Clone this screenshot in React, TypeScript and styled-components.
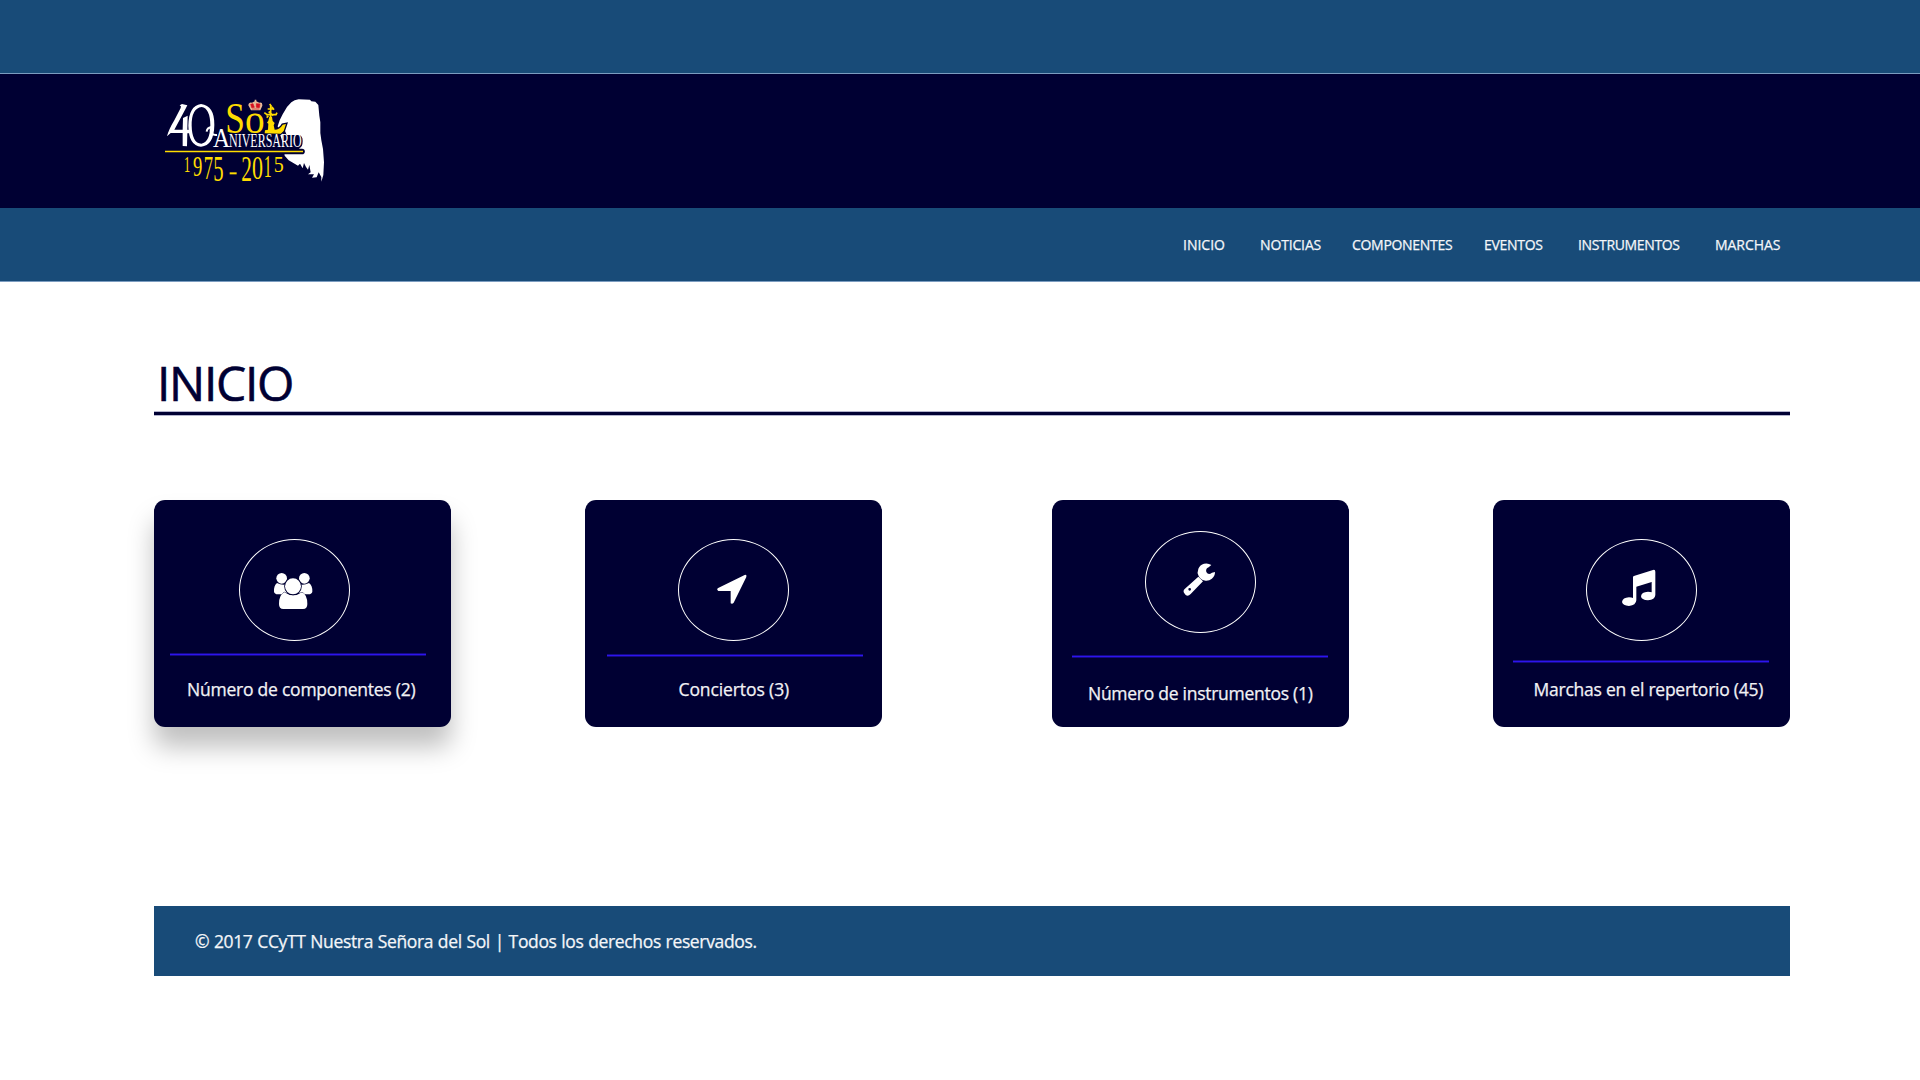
import React from "react";
import styled, { createGlobalStyle } from "styled-components";

const navy = "#000033";
const blue = "#184b78";
const gold = "#ffdc00";

const GlobalStyle = createGlobalStyle`
  * { box-sizing: border-box; }
  body {
    margin: 0;
    background: #fff;
    font-family: "Open Sans", "Noto Sans", "Liberation Sans", sans-serif;
  }
`;

const Page = styled.div`
  width: 1920px;
  height: 1080px;
  overflow: hidden;
  display: flex;
  flex-direction: column;
`;

const TopBar = styled.div`
  height: 74px;
  flex: none;
  background: ${blue};
  border-bottom: 1px solid #7b9cc0;
`;

const Brand = styled.header`
  height: 134px;
  flex: none;
  background: ${navy};
  padding: 11px 150px;
`;

const Nav = styled.nav`
  height: 74px;
  flex: none;
  background: ${blue};
  border-bottom: 1px solid #7b9cc0;
  display: flex;
  align-items: center;
  padding-left: 1183px;
`;

const NavLink = styled.a<{ $width: number; $tracking: number }>`
  width: ${(p) => p.$width}px;
  flex: none;
  color: #f4f6f9;
  font-size: 14px;
  line-height: 20px;
  letter-spacing: ${(p) => p.$tracking}px;
  -webkit-text-stroke: 0.25px #f4f6f9;
  white-space: nowrap;
`;

const Main = styled.main`
  width: 1636px;
  margin-left: 154px;
  display: flex;
  flex-direction: column;
`;

const Title = styled.h1`
  margin: 73px 0 0;
  padding-left: 3px;
  height: 56px;
  line-height: 55px;
  font-size: 48px;
  font-weight: 400;
  letter-spacing: -1.3px;
  -webkit-text-stroke: 0.6px ${navy};
  color: ${navy};
`;

const Rule = styled.div`
  height: 5px;
  background: ${navy};
  border: solid #b3b3cc;
  border-width: 1px 0;
`;

const Cards = styled.section`
  display: flex;
  margin-top: 84px;
`;

const Card = styled.article<{ $gap: number; $top: number; $raised?: boolean }>`
  width: 297px;
  height: 227px;
  flex: none;
  display: flex;
  flex-direction: column;
  margin-left: ${(p) => p.$gap}px;
  padding-top: ${(p) => p.$top}px;
  border-radius: 11px;
  background: ${navy};
  box-shadow: ${(p) => (p.$raised ? "0 20px 26px rgba(0, 0, 0, 0.25)" : "none")};
`;

const Ring = styled.div<{ $left: number }>`
  width: 111px;
  height: 102px;
  flex: none;
  margin-left: ${(p) => p.$left}px;
  border: 1px solid #fff;
  border-radius: 50%;
`;

const Glyph = styled.svg`
  display: block;
  width: 109px;
  height: 100px;
  fill: #fff;
`;

const Divider = styled.div<{ $left: number; $top: number }>`
  width: 256px;
  height: 3px;
  flex: none;
  margin: ${(p) => p.$top}px 0 0 ${(p) => p.$left}px;
  background: #2d14ee;
  border: solid #150a86;
  border-width: 1px 0;
`;

const Label = styled.p<{ $left: number; $top: number; $tracking: number }>`
  margin: ${(p) => p.$top}px 0 0 ${(p) => p.$left}px;
  font-size: 17.5px;
  line-height: 24px;
  letter-spacing: ${(p) => p.$tracking}px;
  -webkit-text-stroke: 0.25px #f2f2f5;
  white-space: nowrap;
  color: #f2f2f5;
`;

const Footer = styled.footer`
  height: 70px;
  margin-top: 179px;
  padding-left: 41px;
  display: flex;
  align-items: center;
  background: ${blue};
  color: #f4f6f9;
  font-size: 17.5px;
  line-height: 24px;
  letter-spacing: -0.35px;
  word-spacing: 0.5px;
  -webkit-text-stroke: 0.25px #f4f6f9;
  white-space: nowrap;
`;

const LogoSvg = styled.svg`
  display: block;
  width: 190px;
  height: 110px;
  font-family: "Liberation Serif", "Times New Roman", serif;
`;

type Digit = { ch: string; x: number; y: number; height: number; width: number };

const years: Digit[] = [
  { ch: "1", x: 101, y: 260, height: 46, width: 20 },
  { ch: "9", x: 129, y: 273, height: 58, width: 28 },
  { ch: "7", x: 161, y: 282, height: 66, width: 28 },
  { ch: "5", x: 190, y: 289, height: 72, width: 31 },
  { ch: "2", x: 274, y: 289, height: 74, width: 32 },
  { ch: "0", x: 306, y: 283, height: 66, width: 33 },
  { ch: "1", x: 341, y: 276, height: 62, width: 24 },
  { ch: "5", x: 371, y: 261, height: 48, width: 30 },
];

const Logo = () => (
  <LogoSvg viewBox="0 0 570 330" aria-label="40 Aniversario Sol">
    <path
      fill="#fff"
      d="M383 124 L389 106 L398 88 L411 66 L424 52 L434 46 L446 43 L480 44 L484 49 L496 50 L505 60 L508 92 L511 112 L511 144 L514 166 L519 192 L522 232 L520 270 L514 290 L514 276 L506 262 L500 277 L486 278 L492 268 L474 268 L482 262 L478 240 L474 254 L468 246 L462 234 L458 250 L450 236 L444 242 L430 234 L416 226 L404 212 L400 180 Z"
    />
    <path d="M398 207 L398 120 L410 150 L446 150 Q458 152 458 168 Q458 186 448 190 V207 Z" fill={navy} />
    <g fill="#fff" stroke="#fff">
      <path
        d="M96 57 L112 61 L106 73 L73 134 L98 134 L99 99 L113 92 L112 134 L122 135 L118 145 L112 145 L111 184 L98 183 L98 144 L62 144 L51 154 Q57 132 73 106 L92 69 Q95 63 89 61 Z"
        strokeWidth="0"
      />
      <path
        d="M153 57 Q194 62 193 120 Q192 182 153 185 Q116 182 115 122 Q116 62 153 57 Z M155 66 Q124 70 125 122 Q126 174 154 176 Q180 172 181 120 Q180 70 155 66 Z"
        fillRule="evenodd"
        strokeWidth="0"
      />
      <path d="M184 126 Q171 128 170 140 M182 130 Q180 152 201 150" fill="none" strokeWidth="6" />
    </g>
    <g fill={gold}>
      <text x="226" y="144" fontSize="130" textLength="59" lengthAdjust="spacingAndGlyphs">S</text>
      <text x="285" y="145" fontSize="128" textLength="59" lengthAdjust="spacingAndGlyphs">o</text>
    </g>
    <path
      fill={gold}
      stroke={navy}
      strokeWidth="8"
      paintOrder="stroke"
      d="M344 145 L345 136 L354 134 L355 116 L351 113 L355 107 L358 95 L366 96 L368 108 L374 114 L371 121 L374 134 Q389 134 398 119 L408 117 L401 138 L392 146 Z"
    />
    <path
      d="M362 97 V60 M353 72 H370 M350 88 L343 83 M348 89 H378 L381 83 M356 80 L370 92 M366 66 L372 74 M355 93 L350 98 M359 57 L365 65"
      fill="none"
      stroke={gold}
      strokeWidth="5"
    />
    <path d="M303 76 L295 61 Q296 51 306 53 L314 49 V44 H319 V49 L328 53 Q338 51 337 62 L331 76 Z" fill="#e8ba98" />
    <path d="M302 58 L309 56 L313 67 L305 68 Z M319 56 L330 57 L328 68 L319 67 Z M306 72 H328" fill="#d81020" stroke="#d81020" strokeWidth="2" />
    <g fill="#fff">
      <text x="189" y="185" fontSize="80" textLength="51" lengthAdjust="spacingAndGlyphs">A</text>
      <text x="237" y="185" fontSize="55" textLength="218" lengthAdjust="spacingAndGlyphs">NIVERSARIO</text>
    </g>
    <path d="M390 199.500 H456" stroke={navy} strokeWidth="17" strokeLinecap="round" />
    <path d="M45 199.500 H459" stroke={gold} strokeWidth="4" />
    <g fill={gold}>
      {years.map((d) => (
        <text key={d.x} x={d.x} y={d.y} fontSize={d.height / 0.67} textLength={d.width} lengthAdjust="spacingAndGlyphs">
          {d.ch}
        </text>
      ))}
    </g>
    <path d="M239 265 H260" stroke={gold} strokeWidth="6" />
  </LogoSvg>
);

const PeopleIcon = () => (
  <Glyph viewBox="300 151 327 300">
    <circle cx="425" cy="266" r="16" />
    <circle cx="493" cy="266" r="16" />
    <path d="M411 280 Q401 288 402 306 Q403 313 414 314 H440 V284 Q425 288 411 280 Z" />
    <path d="M507 280 Q518 288 517 306 Q516 313 505 314 H478 V284 Q493 288 507 280 Z" />
    <path
      d="M433 308 Q417 315 417 343 Q417 358 430 358 H489 Q502 358 502 343 Q502 315 486 308 Q460 326 433 308 Z"
      stroke={navy}
      strokeWidth="3"
      paintOrder="stroke"
    />
    <circle cx="459" cy="290" r="24" stroke={navy} strokeWidth="5" paintOrder="stroke" />
  </Glyph>
);

const ArrowIcon = () => (
  <Glyph viewBox="327 151 327 300">
    <path d="M524 256 Q531 254 529 262 L491 339 Q487 344 482 341 V304 H445 Q439 301 443 296 Z" />
  </Glyph>
);

const WrenchIcon = () => (
  <Glyph viewBox="318 127 327 300">
    <path
      fillRule="evenodd"
      d="M475 261 L489 275 L452 313 Q444 322 437 316 L433 311 Q428 304 434 298 Z M449 295 A4 4 0 1 0 449 303 A4 4 0 1 0 449 295 Z"
    />
    <path d="M514 226 A26 26 0 1 0 525 247 L516 249 Q505 258 499 247 Q496 237 506 233 Z" />
  </Glyph>
);

const MusicIcon = () => (
  <Glyph viewBox="321 151 327 300">
    <path d="M459 262 Q459 259 464 258 L519 241 Q526 239 526 246 V316 Q525 331 504 332 Q484 331 483 320 Q484 307 504 306 Q511 306 515 308 V277 L469 291 V332 Q468 347 447 349 Q428 348 426 337 Q428 324 447 323 Q455 323 459 325 Z" />
  </Glyph>
);

const links = [
  { text: "INICIO", width: 77, tracking: 0 },
  { text: "NOTICIAS", width: 92, tracking: -0.15 },
  { text: "COMPONENTES", width: 132, tracking: -0.3 },
  { text: "EVENTOS", width: 94, tracking: -0.3 },
  { text: "INSTRUMENTOS", width: 137, tracking: -0.35 },
  { text: "MARCHAS", width: 70, tracking: -0.05 },
];

const cards = [
  { text: "Número de componentes (2)", Icon: PeopleIcon, raised: true, gap: 0, top: 39, ring: 85, line: 16, lineTop: 12, label: 33, labelTop: 21, tracking: -0.23 },
  { text: "Conciertos (3)", Icon: ArrowIcon, gap: 134, top: 39, ring: 93, line: 22, lineTop: 13, label: 93.5, labelTop: 20, tracking: -0.1 },
  { text: "Número de instrumentos (1)", Icon: WrenchIcon, gap: 170, top: 31, ring: 93, line: 20, lineTop: 22, label: 36, labelTop: 23, tracking: -0.27 },
  { text: "Marchas en el repertorio (45)", Icon: MusicIcon, gap: 144, top: 39, ring: 93, line: 20, lineTop: 19, label: 40.5, labelTop: 14, tracking: -0.24 },
];

export default function App() {
  return (
    <Page>
      <GlobalStyle />
      <TopBar />
      <Brand>
        <Logo />
      </Brand>
      <Nav>
        {links.map((l) => (
          <NavLink key={l.text} $width={l.width} $tracking={l.tracking}>
            {l.text}
          </NavLink>
        ))}
      </Nav>
      <Main>
        <Title>INICIO</Title>
        <Rule />
        <Cards>
          {cards.map(({ Icon, ...c }) => (
            <Card key={c.text} $gap={c.gap} $top={c.top} $raised={c.raised}>
              <Ring $left={c.ring}>
                <Icon />
              </Ring>
              <Divider $left={c.line} $top={c.lineTop} />
              <Label $left={c.label} $top={c.labelTop} $tracking={c.tracking}>
                {c.text}
              </Label>
            </Card>
          ))}
        </Cards>
        <Footer>© 2017 CCyTT Nuestra Señora del Sol | Todos los derechos reservados.</Footer>
      </Main>
    </Page>
  );
}
